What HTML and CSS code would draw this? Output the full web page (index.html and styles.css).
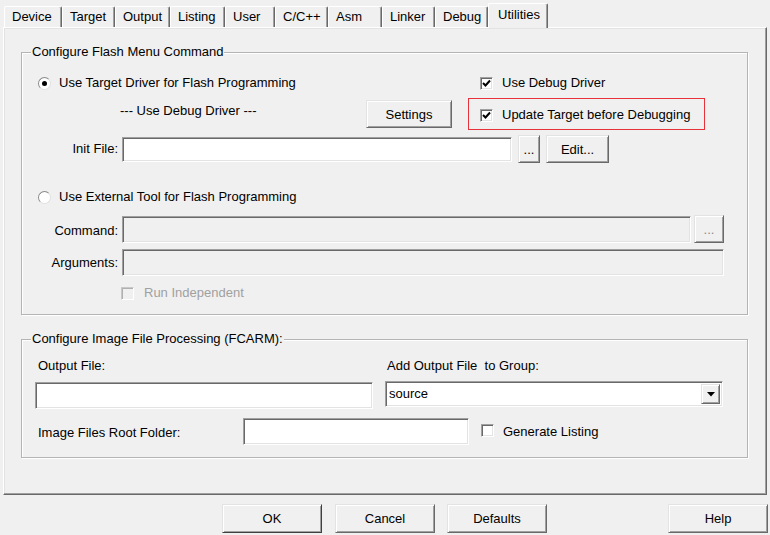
FILE: index.html
```html
<!DOCTYPE html>
<html>
<head>
<meta charset="utf-8">
<link rel="stylesheet" href="styles.css">
</head>
<body>
<div class="dialog">
  <div class="tabs">
    <div class="tab w58">Device</div>
    <div class="tab w53">Target</div>
    <div class="tab w55">Output</div>
    <div class="tab w55">Listing</div>
    <div class="tab w50">User</div>
    <div class="tab w53">C/C++</div>
    <div class="tab w54">Asm</div>
    <div class="tab w53">Linker</div>
    <div class="tab w53">Debug</div>
    <div class="tab tab-active w60">Utilities</div>
  </div>

  <div class="panel">
    <div class="group group-flash">
      <span class="legend">Configure Flash Menu Command</span>

      <div class="row r1">
        <div class="col-left">
          <span class="radio checked"><span class="dot"></span></span>
          <span class="lbl">Use Target Driver for Flash Programming</span>
        </div>
        <div class="col-right pad12">
          <span class="check"><svg width="9" height="9" viewBox="0 0 9 9"><polyline points="1,4 3.5,6.5 8,1.5" fill="none" stroke="#000" stroke-width="2"/></svg></span>
          <span class="lbl">Use Debug Driver</span>
        </div>
      </div>

      <div class="row r2">
        <div class="col-left driver-row">
          <span class="driver-text">--- Use Debug Driver ---</span>
          <span class="btn btn-settings">Settings</span>
        </div>
        <div class="col-right redbox">
          <span class="check"><svg width="9" height="9" viewBox="0 0 9 9"><polyline points="1,4 3.5,6.5 8,1.5" fill="none" stroke="#000" stroke-width="2"/></svg></span>
          <span class="lbl">Update Target before Debugging</span>
        </div>
      </div>

      <div class="row r3">
        <span class="field-label">Init File:</span>
        <span class="field init-field"></span>
        <span class="btn btn-dots small-dots">...</span>
        <span class="btn btn-edit">Edit...</span>
      </div>

      <div class="row r4">
        <span class="radio"></span>
        <span class="lbl">Use External Tool for Flash Programming</span>
      </div>

      <div class="row r5">
        <span class="field-label low">Command:</span>
        <span class="field disabled cmd-field"></span>
        <span class="btn btn-dots2"><span class="dots-dim">...</span></span>
      </div>

      <div class="row r6">
        <span class="field-label">Arguments:</span>
        <span class="field disabled args-field"></span>
      </div>

      <div class="row r7">
        <span class="check disabled-check"></span>
        <span class="lbl dim">Run Independent</span>
      </div>
    </div>

    <div class="group group-image">
      <span class="legend">Configure Image File Processing (FCARM):</span>
      <div class="img-grid">
        <span class="lbl lab-out">Output File:</span>
        <span class="lbl lab-group">Add Output File&nbsp; to Group:</span>
        <span class="field out-field"></span>
        <span class="select">
          <span class="select-text">source</span>
          <span class="select-btn"><svg width="8" height="5" viewBox="0 0 8 5"><polygon points="0,0 8,0 4,4.5" fill="#000"/></svg></span>
        </span>
        <div class="root-row">
          <span class="lbl root-label">Image Files Root Folder:</span>
          <span class="field root-field"></span>
          <span class="check gen-check"></span>
          <span class="lbl">Generate Listing</span>
        </div>
      </div>
    </div>
  </div>

  <div class="buttons">
    <span class="btn dlg-btn ok">OK</span>
    <span class="btn dlg-btn cancel">Cancel</span>
    <span class="btn dlg-btn defaults">Defaults</span>
    <span class="btn dlg-btn help">Help</span>
  </div>
</div>
</body>
</html>
```

FILE: styles.css
```css
html, body {
  margin: 0;
  padding: 0;
  background: #f0f0f0;
}
body {
  width: 770px;
  height: 535px;
  overflow: hidden;
  font-family: "Liberation Sans", Arial, sans-serif;
  font-size: 13px;
  color: #000;
}
.dialog {
  width: 770px;
  height: 535px;
}

/* Tabs */
.tabs {
  display: flex;
  align-items: flex-end;
  height: 27px;
  padding-left: 4px;
}
.tab {
  box-sizing: border-box;
  height: 21px;
  border-top: 1px solid #fff;
  border-left: 1px solid #fff;
  border-right: 1px solid #696969;
  box-shadow: inset -1px 0 0 #a0a0a0;
  border-top-left-radius: 2px;
  border-top-right-radius: 2px;
  padding-left: 7px;
  line-height: 20px;
  background: #f0f0f0;
  white-space: nowrap;
}
.tab-active {
  position: relative;
  z-index: 1;
  height: 25px;
  margin-bottom: -1px;
  padding-left: 9px;
  padding-top: 1px;
  line-height: 20px;
}
.w50 { width: 50px; }
.w53 { width: 53px; }
.w54 { width: 54px; }
.w55 { width: 55px; }
.w58 { width: 58px; }
.w60 { width: 60px; }

/* Panel */
.panel {
  box-sizing: border-box;
  margin-left: 3px;
  width: 764px;
  height: 468px;
  border: 1px solid;
  border-color: #fff #696969 #696969 #fff;
  box-shadow: inset -1px -1px 0 #a0a0a0, inset 1px 1px 0 #e3e3e3;
  padding: 24px 0 0 17px;
}

.group {
  position: relative;
  box-sizing: border-box;
  width: 727px;
  border: 1px solid #b4b4b4;
  box-shadow: inset 1px 1px 0 #fff, 1px 1px 0 #fff;
}
.legend {
  position: absolute;
  top: -9px;
  left: 9px;
  padding: 0 1px;
  line-height: 16px;
  background: #f0f0f0;
  white-space: nowrap;
}
.group-flash {
  height: 263px;
  display: flex;
  flex-direction: column;
}
.group-image {
  height: 119px;
  margin-top: 24px;
}

.row {
  display: flex;
  align-items: center;
}
.lbl {
  line-height: 16px;
  white-space: nowrap;
}
.r1 { margin-top: 22px; height: 16px; }
.r2 { margin-top: 7px; height: 32px; }
.r3 { margin-top: 5px; height: 28px; }
.r4 { margin-top: 26px; height: 16px; padding-left: 16px; }
.r5 { margin-top: 10px; height: 28px; }
.r6 { margin-top: 6px; height: 27px; }
.r7 { margin-top: 9px; height: 16px; padding-left: 99px; }

.col-left {
  box-sizing: border-box;
  width: 446px;
  display: flex;
  align-items: center;
  padding-left: 16px;
}
.col-right {
  display: flex;
  align-items: center;
}
.pad12 { padding-left: 12px; }

.driver-row {
  padding-left: 98px;
  height: 32px;
}
.driver-text {
  width: 246px;
  line-height: 16px;
  align-self: flex-start;
  margin-top: 5px;
}
.redbox {
  box-sizing: border-box;
  width: 237px;
  height: 32px;
  border: 1px solid #e8323a;
  padding-left: 11px;
  padding-top: 2px;
}

/* Radios and checks */
.radio {
  box-sizing: border-box;
  width: 13px;
  height: 13px;
  border-radius: 50%;
  border: 1px solid;
  border-color: #8a8a8a #e0e0e0 #e0e0e0 #8a8a8a;
  background: #fff;
  margin-right: 8px;
  display: flex;
  align-items: center;
  justify-content: center;
  flex: none;
}
.dot {
  width: 5px;
  height: 5px;
  border-radius: 50%;
  background: #000;
}
.check {
  box-sizing: border-box;
  width: 13px;
  height: 13px;
  border: 1px solid;
  border-color: #a0a0a0 #fff #fff #a0a0a0;
  box-shadow: inset 1px 1px 0 #696969, inset -1px -1px 0 #e3e3e3;
  background: #fff;
  margin-right: 9px;
  display: flex;
  align-items: center;
  justify-content: center;
  flex: none;
}
.disabled-check {
  background: #f0f0f0;
  border-color: #c8c8c8 #fff #fff #c8c8c8;
  box-shadow: inset 1px 1px 0 #b0b0b0;
  margin-right: 10px;
}
.dim {
  color: #a0a0a0;
}

/* Fields */
.field {
  box-sizing: border-box;
  display: block;
  border: 1px solid;
  border-color: #a0a0a0 #fff #fff #a0a0a0;
  box-shadow: inset 1px 1px 0 #696969, inset -1px -1px 0 #e3e3e3;
  background: #fff;
  flex: none;
}
.field.disabled {
  background: #f0f0f0;
}
.field-label {
  box-sizing: border-box;
  width: 100px;
  padding-right: 4px;
  text-align: right;
  line-height: 16px;
  flex: none;
}
.field-label.low { padding-top: 3px; }
.init-field { width: 390px; height: 25px; }
.cmd-field { width: 569px; height: 27px; }
.args-field { width: 602px; height: 27px; }

/* Buttons */
.btn {
  box-sizing: border-box;
  display: flex;
  align-items: center;
  justify-content: center;
  border: 1px solid;
  border-color: #e3e3e3 #696969 #696969 #e3e3e3;
  box-shadow: inset 1px 1px 0 #fff, inset -1px -1px 0 #a0a0a0;
  background: #f0f0f0;
  white-space: nowrap;
  flex: none;
}
.btn-settings { width: 86px; height: 28px; }
.btn-dots { width: 22px; height: 28px; margin-left: 6px; }
.btn-edit { width: 63px; height: 28px; margin-left: 6px; }
.btn-dots2 { width: 30px; height: 28px; margin-left: 3px; }
.dots-dim { color: #8a8a8a; }

/* Image group */
.img-grid {
  display: grid;
  grid-template-columns: 338px 338px;
  column-gap: 12px;
  padding-left: 13px;
  padding-top: 18px;
}
.lab-out { padding-left: 3px; }
.lab-group { padding-left: 2px; }
.out-field {
  margin-top: 8px;
  height: 27px;
}
.select {
  box-sizing: border-box;
  margin-top: 7px;
  height: 26px;
  display: flex;
  align-items: center;
  border: 1px solid;
  border-color: #a0a0a0 #fff #fff #a0a0a0;
  box-shadow: inset 1px 1px 0 #696969, inset -1px -1px 0 #e3e3e3;
  background: #fff;
  padding: 2px 2px 2px 3px;
}
.select-text {
  flex: 1;
  line-height: 16px;
}
.select-btn {
  box-sizing: border-box;
  width: 19px;
  height: 20px;
  display: flex;
  align-items: center;
  justify-content: center;
  border: 1px solid;
  border-color: #e3e3e3 #696969 #696969 #e3e3e3;
  box-shadow: inset 1px 1px 0 #fff, inset -1px -1px 0 #a0a0a0;
  background: #f0f0f0;
}
.root-row {
  grid-column: 1 / 3;
  display: flex;
  align-items: center;
  margin-top: 9px;
  height: 27px;
}
.root-label {
  box-sizing: border-box;
  width: 208px;
  padding-left: 3px;
  padding-top: 3px;
}
.root-field {
  width: 226px;
  height: 27px;
  margin-right: 12px;
}
.gen-check {
  margin-bottom: 3px;
}

/* Dialog buttons */
.buttons {
  display: flex;
  margin-top: 9px;
}
.dlg-btn {
  width: 100px;
  height: 29px;
}
.ok { margin-left: 222px; border-color: #e3e3e3 #404040 #404040 #e3e3e3; }
.cancel { margin-left: 13px; }
.defaults { margin-left: 12px; }
.help { margin-left: 121px; }
```
